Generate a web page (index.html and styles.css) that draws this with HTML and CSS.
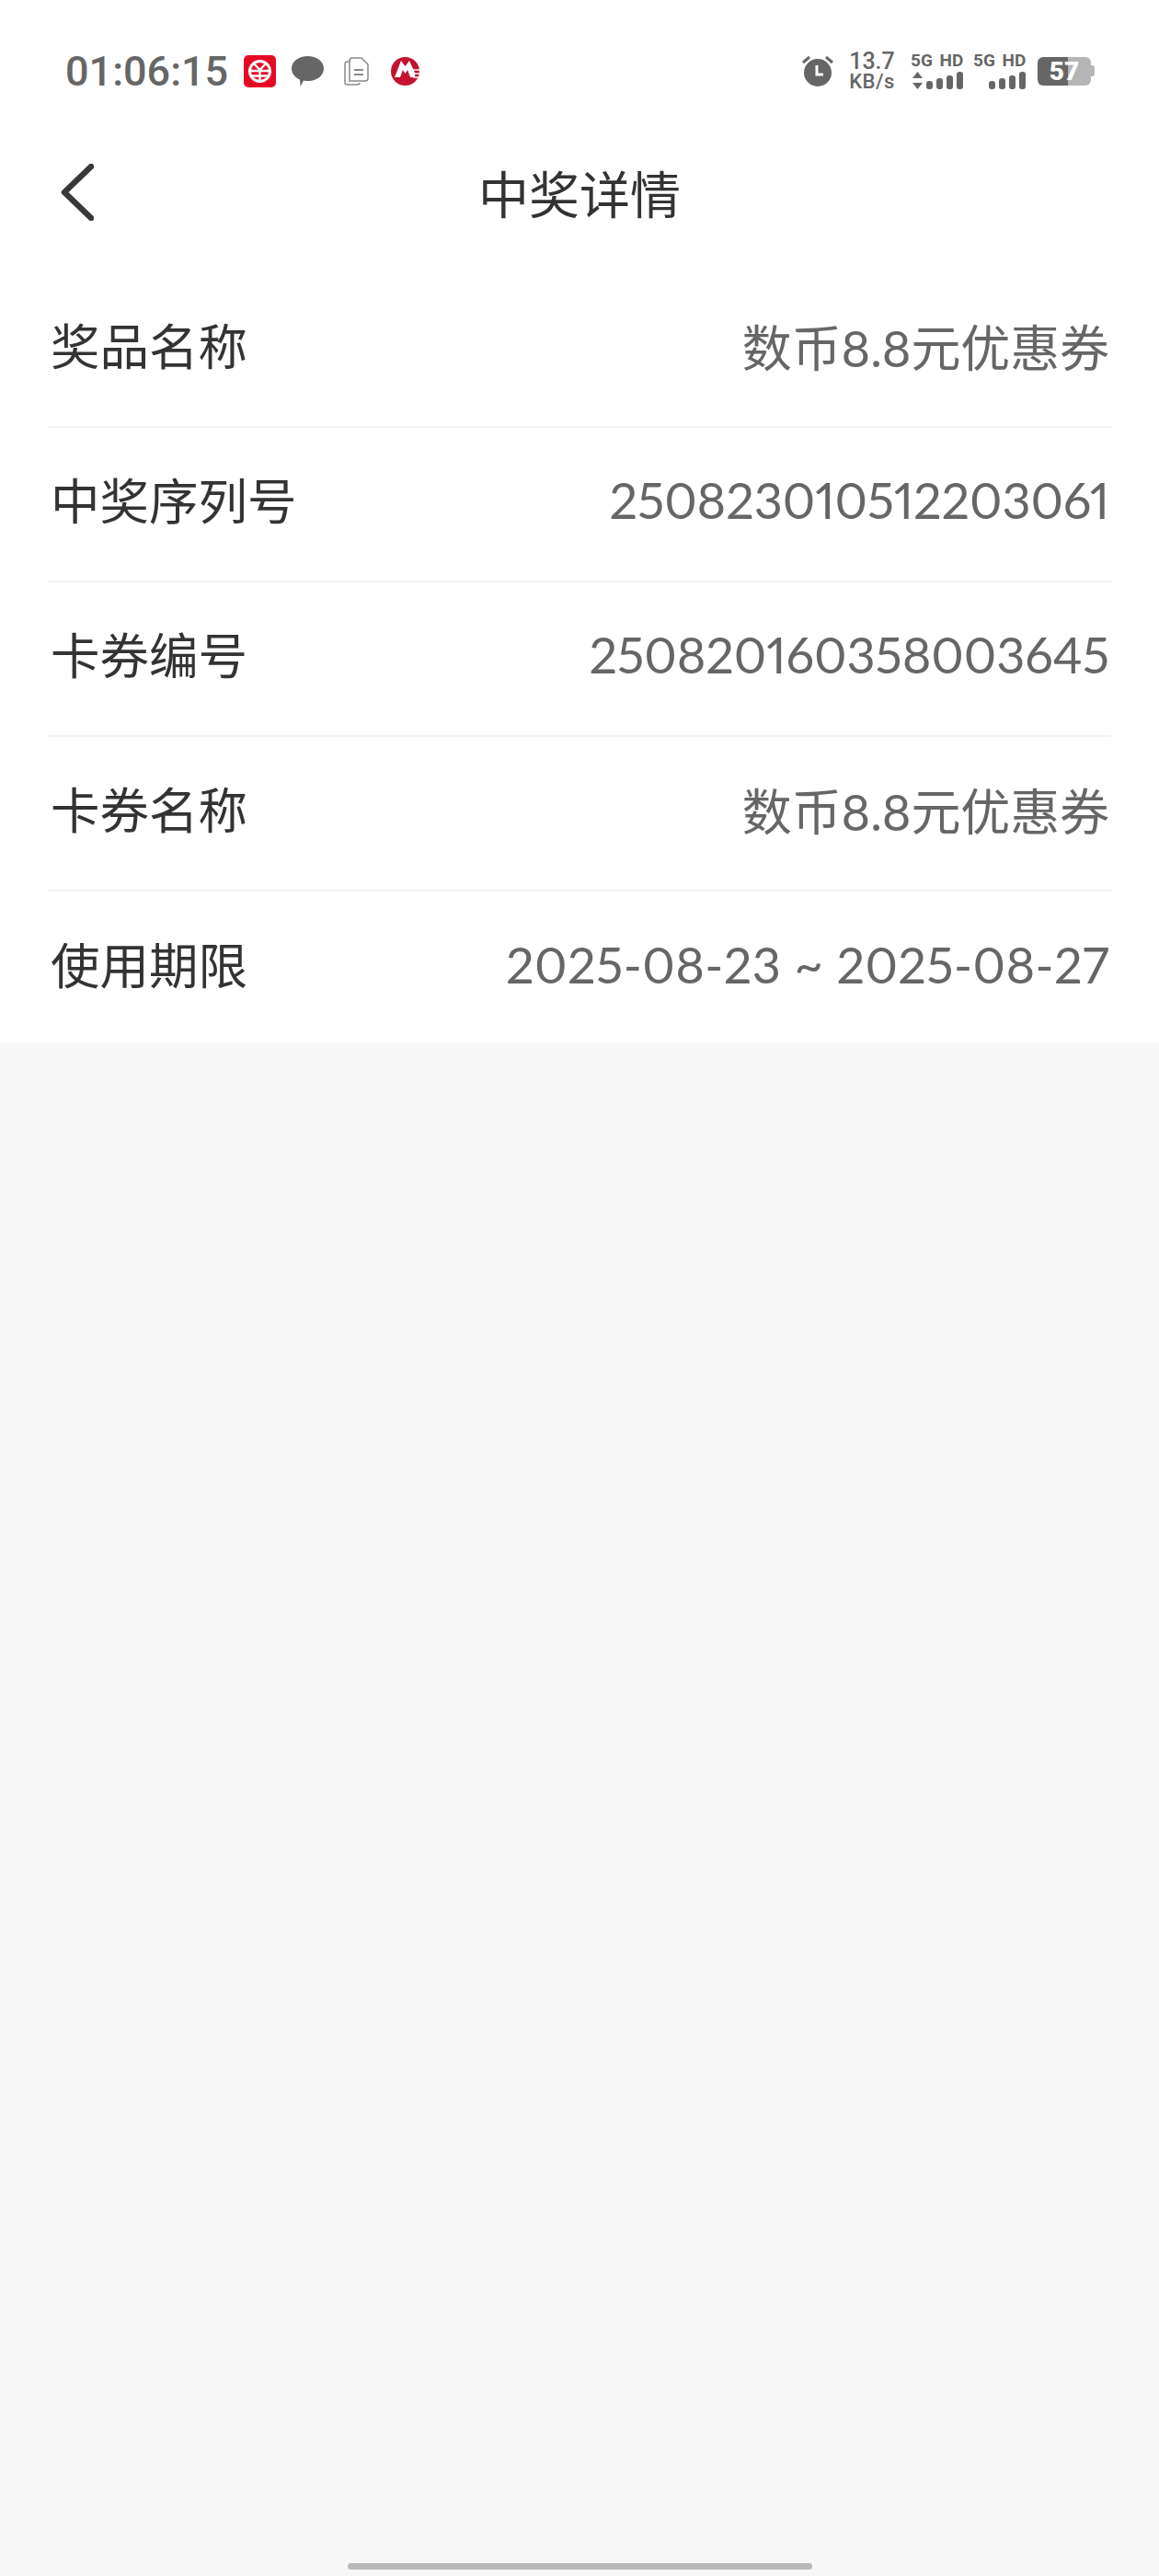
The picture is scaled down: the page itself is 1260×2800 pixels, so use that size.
FILE: index.html
```html
<!DOCTYPE html>
<html lang="zh-CN">
<head>
    <meta charset="UTF-8">
    <meta name="viewport" content="width=device-width, initial-scale=1.0">
    <title>中奖详情</title>
    <link rel="stylesheet" href="styles.css">
</head>
<body>

<div class="page">
    <div class="top-panel">
        <div class="status-bar">
            <div class="status-left">
                <span class="clock">01:06:15</span>
                <svg class="icon-ecny" viewBox="0 0 35 35">
                    <rect width="35" height="35" rx="5" fill="#e60b25"/>
                    <circle cx="17.5" cy="17.5" r="11" fill="none" stroke="#fff" stroke-width="3"/>
                    <path d="M11 9l6.500 7 6.500-7M7 17h21M7 22.500h21M17.500 16v12" fill="none" stroke="#fff" stroke-width="2.400"/>
                </svg>
                <svg class="icon-bubble" viewBox="0 0 35 33">
                    <path d="M17.500 0C27 0 35 5.500 35 13.500S27 27 18.500 27c-2 0-4 0-5.500-.5L9.500 33l-.5-7.500C4 23.500 0 19 0 13.500 0 5.500 8 0 17.500 0z" fill="#666"/>
                </svg>
                <svg class="icon-doc" viewBox="0 0 27 31">
                    <path d="M6 27V4q0-3 3-3h10l7 7v15q0 3-3 3H7M6 5H4Q1 5 1 8v20q0 2 3 2h10q3 0 3-2" fill="none" stroke="#8a8a8a" stroke-width="1.500"/>
                    <path d="M11 14h10M11 19h10" stroke="#666" stroke-width="1.500"/>
                </svg>
                <svg class="icon-cmb" viewBox="0 0 31 31">
                    <circle cx="15.500" cy="15.500" r="15.500" fill="#c4122f"/>
                    <path d="M4 22L11 4l4.500 6L20 4l6 13v5h-5l-3-8-2.500 4-2.500-4-3 8z" fill="#fff"/>
                    <path d="M24 14h7M24 18h7M24 22h7" stroke="#fff" stroke-width="1.500"/>
                </svg>
            </div>
            <div class="status-right">
                <svg class="icon-alarm" viewBox="0 0 34 34">
                    <circle cx="17" cy="19" r="15" fill="#666"/>
                    <path d="M1 8l7-6M33 8l-7-6" stroke="#666" stroke-width="3"/>
                    <path d="M16 11v10h7" fill="none" stroke="#fff" stroke-width="3"/>
                </svg>
                <div class="net-speed">
                    <span class="speed-num">13.7</span>
                    <span class="speed-unit">KB/s</span>
                </div>
                <div class="sim">
                    <span class="sim-label">5G HD</span>
                    <div class="sim-signal">
                        <svg class="icon-arrows" viewBox="0 0 11 19">
                            <path d="M5.500 0L11 7H0zM5.500 19L0 12h11z" fill="#666"/>
                        </svg>
                        <i class="bar bar-1"></i><i class="bar bar-2"></i><i class="bar bar-3"></i><i class="bar bar-4"></i>
                    </div>
                </div>
                <div class="sim">
                    <span class="sim-label">5G HD</span>
                    <div class="sim-signal">
                        <i class="bar bar-1"></i><i class="bar bar-2"></i><i class="bar bar-3"></i><i class="bar bar-4"></i>
                    </div>
                </div>
                <div class="battery">
                    <div class="battery-body">57</div>
                    <div class="battery-cap"></div>
                </div>
            </div>
        </div>

        <div class="nav-bar">
            <svg class="back-icon" viewBox="0 0 36 62">
                <path d="M33 3L4 31l29 28" fill="none" stroke="#383838" stroke-width="6.500" stroke-linecap="round" stroke-linejoin="round"/>
            </svg>
            <span class="nav-title">中奖详情</span>
        </div>

        <div class="detail-list">
            <div class="detail-row">
                <span class="detail-label">奖品名称</span>
                <span class="detail-value">数币8.8元优惠券</span>
            </div>
            <div class="detail-row">
                <span class="detail-label">中奖序列号</span>
                <span class="detail-value">250823010512203061</span>
            </div>
            <div class="detail-row">
                <span class="detail-label">卡券编号</span>
                <span class="detail-value">250820160358003645</span>
            </div>
            <div class="detail-row">
                <span class="detail-label">卡券名称</span>
                <span class="detail-value">数币8.8元优惠券</span>
            </div>
            <div class="detail-row">
                <span class="detail-label">使用期限</span>
                <span class="detail-value detail-date">2025-08-23 ~ 2025-08-27</span>
            </div>
        </div>
    </div>

    <div class="home-bar"></div>
</div>

</body>
</html>
```

FILE: styles.css
```css
* {
    margin: 0;
    padding: 0;
    box-sizing: border-box;
}
body {
    font-family: Lato, "Noto Sans CJK SC", sans-serif;
    background-color: #f7f7f7;
}
.page {
    display: flex;
    flex-direction: column;
    justify-content: space-between;
    height: 2800px;
}
.top-panel {
    background: #fff;
    height: 1133px;
}

/* status bar */
.status-bar {
    display: flex;
    justify-content: space-between;
    align-items: center;
    height: 154px;
    padding: 0 70px 0 71px;
}
.status-left,
.status-right {
    display: flex;
    align-items: center;
}
.clock {
    width: 194px;
    font-family: Roboto, sans-serif;
    font-size: 45px;
    font-weight: 500;
    color: #666;
}
.icon-ecny {
    width: 35px;
    height: 35px;
    margin-right: 17px;
}
.icon-bubble {
    width: 35px;
    height: 33px;
    margin-right: 22px;
}
.icon-doc {
    width: 27px;
    height: 31px;
    margin-right: 24px;
}
.icon-cmb {
    width: 31px;
    height: 31px;
}
.icon-alarm {
    width: 34px;
    height: 34px;
    margin-right: 17px;
}
.net-speed {
    display: flex;
    flex-direction: column;
    align-items: center;
    width: 50px;
    margin-right: 17px;
    color: #666;
    font-family: Roboto, sans-serif;
}
.speed-num {
    font-size: 25px;
    font-weight: 500;
    line-height: 24px;
}
.speed-unit {
    font-size: 22px;
    font-weight: 500;
    line-height: 20px;
    letter-spacing: 0.5px;
}
.sim {
    display: flex;
    flex-direction: column;
    width: 57px;
    margin-right: 11px;
    color: #666;
}
.sim-label {
    font-family: Roboto, sans-serif;
    font-size: 19px;
    font-weight: 700;
    line-height: 18px;
    white-space: nowrap;
    word-spacing: 3px;
}
.sim-signal {
    display: flex;
    align-items: flex-end;
    justify-content: flex-end;
    gap: 4px;
    height: 20px;
    margin-top: 2px;
}
.icon-arrows {
    width: 11px;
    height: 19px;
}
.bar {
    width: 7px;
    background: #666;
    border-radius: 3px;
}
.bar-1 { height: 9px; }
.bar-2 { height: 12px; }
.bar-3 { height: 15px; }
.bar-4 { height: 19px; }
.battery {
    display: flex;
    align-items: center;
    margin-left: 2px;
}
.battery-body {
    width: 58px;
    height: 31px;
    border-radius: 6px;
    background: linear-gradient(to right, #666 57%, #b5b5b5 57%);
    color: #fff;
    font-family: Roboto, sans-serif;
    font-size: 28px;
    font-weight: 900;
    line-height: 31px;
    text-align: center;
}
.battery-cap {
    width: 4px;
    height: 12px;
    background: #b5b5b5;
    border-radius: 0 3px 3px 0;
}

/* nav */
.nav-bar {
    position: relative;
    display: flex;
    justify-content: center;
    align-items: center;
    height: 112px;
    padding-bottom: 5px;
}
.back-icon {
    position: absolute;
    left: 66px;
    top: 24px;
    width: 36px;
    height: 62px;
}
.nav-title {
    font-size: 55px;
    color: #333;
}

/* list */
.detail-list {
    padding: 31px 52px 0;
}
.detail-row {
    display: flex;
    justify-content: space-between;
    align-items: center;
    height: 168px;
    padding-bottom: 10px;
    border-bottom: 2px solid #f3f3f3;
}
.detail-row:last-child {
    border-bottom: none;
}
.detail-label {
    margin: 0 0 3px 3px;
    font-size: 53.5px;
    color: #333;
}
.detail-value {
    margin-right: 2px;
    font-size: 54px;
    color: #666;
    font-variant-numeric: proportional-nums;
    letter-spacing: -0.1px;
}
.detail-date {
    letter-spacing: 0.4px;
}
.home-bar {
    align-self: center;
    width: 505px;
    height: 7px;
    margin-bottom: 7px;
    border-radius: 4px;
    background: #b8b8b8;
}
```
